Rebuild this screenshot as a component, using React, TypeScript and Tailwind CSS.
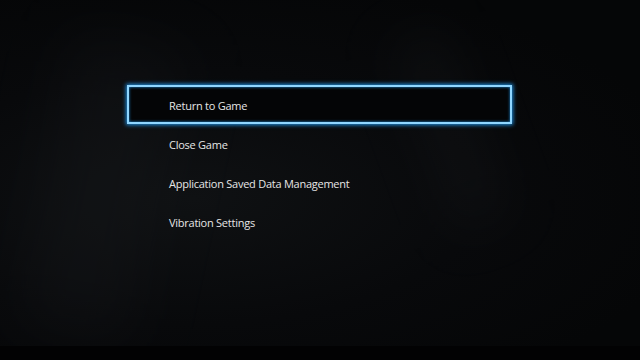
import React from 'react'

const items = [
  'Return to Game',
  'Close Game',
  'Application Saved Data Management',
  'Vibration Settings',
]

const App: React.FC = () => {
  return (
    <div
      className="relative w-[640px] h-[360px] overflow-hidden bg-[#050607]"
      style={{ fontFamily: '"Open Sans", "Noto Sans", sans-serif' }}
    >
      {/* faint backdrop */}
      <div className="absolute inset-0 bg-[radial-gradient(ellipse_at_30%_55%,#0f1113_0%,#08090b_45%,#050607_80%)]" />
      <div className="absolute left-[40px] top-[40px] w-[120px] h-[300px] bg-[#1a1c1f] opacity-30 blur-[30px] rotate-[12deg]" />
      <div className="absolute left-[420px] top-[30px] w-[60px] h-[200px] bg-[#1a1c1f] opacity-30 blur-[25px] -rotate-[20deg]" />
      <div className="absolute left-0 right-0 bottom-0 h-[14px] bg-[#020203]" />

      <div className="relative pt-[85px] pl-[127px]">
        <ul className="flex flex-col">
          {items.map((label, i) => (
            <li
              key={label}
              className={
                i === 0
                  ? 'w-[385px] h-[39px] flex items-center pt-[3px] pl-[40px] border-2 border-[#8fd6ff] shadow-[0_0_4px_1px_#1e8fe0,inset_0_0_3px_#1e8fe0] bg-[#040506]'
                  : 'w-[385px] h-[39px] flex items-center pt-[4px] pl-[42px]'
              }
            >
              <span className="text-[11px] text-[#e6e6e6] tracking-[-0.25px]">{label}</span>
            </li>
          ))}
        </ul>
      </div>
    </div>
  )
}

export default App
